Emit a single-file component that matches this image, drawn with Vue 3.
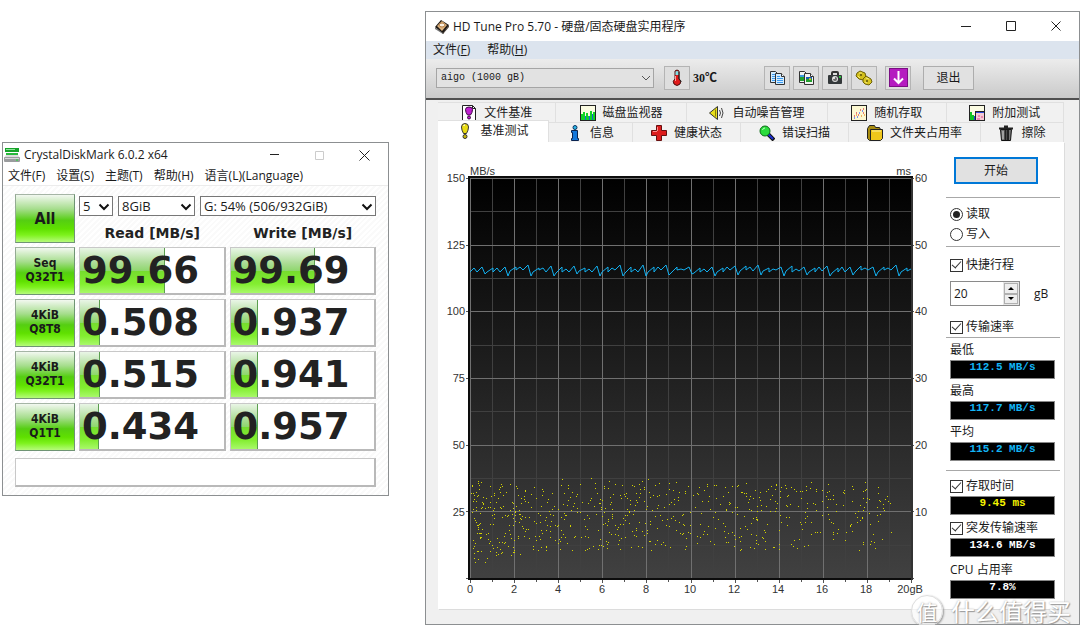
<script setup>
import { ref } from 'vue'

const runs = ref('5')
const size = ref('8GiB')
const drive = ref('G: 54% (506/932GiB)')
const disk = ref('aigo (1000 gB)')
const mode = ref('read')
const shortStroke = ref(true)
const transfer = ref(true)
const access = ref(true)
const burst = ref(true)
const stroke = ref('20')

const cdmMenu = ['文件(F)', '设置(S)', '主题(T)', '帮助(H)', '语言(L)(Language)']
const tests = [
  { a: 'Seq', b: 'Q32T1', read: '99.66', rp: 59, write: '99.69', wp: 59 },
  { a: '4KiB', b: 'Q8T8', read: '0.508', rp: 14, write: '0.937', wp: 19 },
  { a: '4KiB', b: 'Q32T1', read: '0.515', rp: 14, write: '0.941', wp: 19 },
  { a: '4KiB', b: 'Q1T1', read: '0.434', rp: 13, write: '0.957', wp: 19 }
]

const tabsTop = [
  { icon: 'filebench', text: '文件基准', w: 118 },
  { icon: 'monitor', text: '磁盘监视器', w: 130 },
  { icon: 'sound', text: '自动噪音管理', w: 141 },
  { icon: 'random', text: '随机存取', w: 118 },
  { icon: 'extra', text: '附加测试', w: 117 }
]
const tabsBottom = [
  { icon: 'bench', text: '基准测试', w: 111, active: true },
  { icon: 'info', text: '信息', w: 84 },
  { icon: 'health', text: '健康状态', w: 108 },
  { icon: 'scan', text: '错误扫描', w: 108 },
  { icon: 'folder', text: '文件夹占用率', w: 132 },
  { icon: 'erase', text: '擦除', w: 83 }
]

const speeds = [
  { label: '最低', value: '112.5 MB/s' },
  { label: '最高', value: '117.7 MB/s' },
  { label: '平均', value: '115.2 MB/s' }
]

const x0 = 470
const x1 = 911
const y0 = 178
const y1 = 578
const cols = Array.from({ length: 21 }, (_, i) => ({ x: Math.round(x0 + (i * (x1 - x0)) / 20), major: i % 2 === 0, n: i }))
const rows = Array.from({ length: 13 }, (_, i) => ({ y: Math.round(y0 + (i * (y1 - y0)) / 12), major: i % 2 === 0, n: i }))

let seed = 77123
const rand = () => {
  seed = (seed * 48271) % 2147483647
  return seed / 2147483647
}
const dots = Array.from({ length: 700 }, () => {
  const t = Math.pow(rand(), 1.45)
  const low = t < 0.04 ? 564 : t < 0.12 ? 557 : 551
  const edge = 480 + rand() * 5 - (rand() > 0.93 ? 6 : 0)
  return { x: Math.round(x0 + rand() * 5 + t * 417), y: Math.round(edge + (low - edge) * rand()) }
})

const wave = (() => {
  const steps = [[0, 1], [4, -2], [3, 1], [5, -4], [3, 5], [2, 2], [6, -3]]
  const pts = []
  let x = x0
  for (let i = 0; x < x1; i++) {
    const [dx, dy] = steps[i % steps.length]
    x = Math.min(x1, x + dx)
    pts.push(`${x},${270 + dy + Math.round(rand() * 3 - 1.5)}`)
  }
  return pts.join(' ')
})()
</script>

<template>
  <main class="desktop">
    <section class="win cdm">
      <header class="title">
        <svg class="app-icon" viewBox="0 0 16 16" width="16" height="16">
          <path d="M1 1h14v4H1z" fill="#16a32a" />
          <path d="M2 2h9v1H2z" fill="#8fe79a" />
          <path d="M2 6h12v2H2z" fill="#27b83b" />
          <path d="M2 8h12l2 3H0z" fill="#dcdcdc" />
          <rect x="0" y="10" width="16" height="5" rx="1" fill="#9a9c9e" />
          <path d="M1 11h14v1H1z" fill="#d5d7d9" />
          <circle cx="13" cy="13" r="1" fill="#3fd04e" />
        </svg>
        <h1>CrystalDiskMark 6.0.2 x64</h1>
        <div class="controls">
          <button type="button" aria-label="Minimize"><svg viewBox="0 0 11 11" width="11" height="11"><path d="M1 4.500h9" stroke="#222" /></svg></button>
          <button type="button" aria-label="Maximize" disabled><svg viewBox="0 0 11 11" width="11" height="11"><path d="M1.500 1.500h8v8h-8z" fill="none" stroke="#ccc" /></svg></button>
          <button type="button" aria-label="Close"><svg viewBox="0 0 11 11" width="11" height="11"><path d="M.5.5l10 10M10.500.5l-10 10" stroke="#222" /></svg></button>
        </div>
      </header>
      <nav class="menu">
        <button v-for="m in cdmMenu" :key="m" type="button">{{ m }}</button>
      </nav>
      <div class="cdm-body">
        <div class="bench">
          <button type="button" class="green all">All</button>
          <div class="top">
            <div class="selects">
              <span class="sel runs">
                <select v-model="runs" aria-label="Test count"><option>5</option></select>
                <svg viewBox="0 0 12 8" width="12" height="8"><path d="M1.500 1.500L6 6l4.500-4.500" fill="none" stroke="#111" stroke-width="2" /></svg>
              </span>
              <span class="sel size">
                <select v-model="size" aria-label="Test size"><option>8GiB</option></select>
                <svg viewBox="0 0 12 8" width="12" height="8"><path d="M1.500 1.500L6 6l4.500-4.500" fill="none" stroke="#111" stroke-width="2" /></svg>
              </span>
              <span class="sel drive">
                <select v-model="drive" aria-label="Drive"><option>G: 54% (506/932GiB)</option></select>
                <svg viewBox="0 0 12 8" width="12" height="8"><path d="M1.500 1.500L6 6l4.500-4.500" fill="none" stroke="#111" stroke-width="2" /></svg>
              </span>
            </div>
            <div class="heads"><span>Read [MB/s]</span><span>Write [MB/s]</span></div>
          </div>
          <template v-for="t in tests" :key="t.a + t.b">
            <button type="button" class="green"><span>{{ t.a }}</span><span>{{ t.b }}</span></button>
            <div class="cell"><i class="bar" :style="{ width: t.rp + '%' }"></i><b>{{ t.read }}</b></div>
            <div class="cell"><i class="bar" :style="{ width: t.wp + '%' }"></i><b>{{ t.write }}</b></div>
          </template>
        </div>
        <div class="comment"></div>
      </div>
    </section>

    <section class="win hdt">
      <header class="title">
        <svg class="app-icon" viewBox="0 0 16 16" width="16" height="16">
          <path d="M1 8l6-7 8 5-6 9z" fill="#1d1814" />
          <path d="M1 8l8 6v1L1 10z" fill="#777" />
          <path d="M3 7l5-5 5 4-5 6z" fill="#dfb582" />
          <ellipse cx="8" cy="6" rx="3" ry="2" fill="#f9efe0" stroke="#b27a3d" />
          <path d="M9 14l6-8v2l-6 7z" fill="#4b4038" />
        </svg>
        <h1>HD Tune Pro 5.70 - 硬盘/固态硬盘实用程序</h1>
        <div class="controls">
          <button type="button" aria-label="Minimize"><svg viewBox="0 0 11 11" width="11" height="11"><path d="M0 5.500h10" stroke="#222" /></svg></button>
          <button type="button" aria-label="Maximize"><svg viewBox="0 0 11 11" width="11" height="11"><path d="M.5.5h9v9h-9z" fill="none" stroke="#222" /></svg></button>
          <button type="button" aria-label="Close"><svg viewBox="0 0 11 11" width="11" height="11"><path d="M.5.5l9 9M9.500.5l-9 9" stroke="#222" /></svg></button>
        </div>
      </header>
      <nav class="menu">
        <button type="button">文件(<u>F</u>)</button>
        <button type="button">帮助(<u>H</u>)</button>
      </nav>
      <div class="toolbar">
        <span class="sel disk">
          <select v-model="disk" aria-label="Disk"><option>aigo (1000 gB)</option></select>
          <svg viewBox="0 0 10 6" width="10" height="6"><path d="M1 1l4 4 4-4" fill="none" stroke="#555" /></svg>
        </span>
        <button type="button" class="tool" aria-label="Temperature">
          <svg viewBox="0 0 16 18" width="16" height="18">
            <path d="M6 2q2-2 4 0v8q3 2 1 5-3 3-6 0-2-3 1-5z" fill="#e01a1a" stroke="#4a1010" />
            <path d="M6.500 2.500q1.500-1 3 0V6h-3z" fill="#7fdfe6" />
            <path d="M6.500 7v5" stroke="#ff9a9a" />
            <path d="M10 3v7q2 1 2 3" stroke="#222" fill="none" />
          </svg>
        </button>
        <output class="temp">30℃</output>
        <div class="tools">
          <button type="button" class="tool" aria-label="Copy text">
            <svg viewBox="0 0 18 18" width="18" height="18">
              <path d="M2.500 2.500h5l2 2v9h-7z" fill="#d4ecff" stroke="#333" />
              <path d="M4 5.500h4M4 7.500h4M4 9.500h4M4 11.500h4" stroke="#3c9bf0" />
              <path d="M7.500 4.500h6l3 3v8h-9z" fill="#d4ecff" stroke="#333" />
              <path d="M13.500 4.500v3h3" fill="#fff" stroke="#333" />
              <path d="M9 7.500h3M9 9.500h6M9 11.500h6M9 13.500h6" stroke="#3c9bf0" />
            </svg>
          </button>
          <button type="button" class="tool" aria-label="Copy image">
            <svg viewBox="0 0 18 18" width="18" height="18">
              <path d="M2.500 2.500h5l2 2v9h-7z" fill="#f2f2f2" stroke="#333" />
              <path d="M3 6h5v6H3z" fill="#22a02c" /><path d="M3 6h5v2H3z" fill="#3a9be0" />
              <path d="M7.500 4.500h6l3 3v8h-9z" fill="#f2f2f2" stroke="#333" />
              <path d="M13.500 4.500v3h3" fill="#fff" stroke="#333" />
              <path d="M9 8h6v5H9z" fill="#22a02c" /><path d="M9 8h6v2H9z" fill="#1a5bb0" /><circle cx="13" cy="10" r="1" fill="#f0d020" />
            </svg>
          </button>
          <button type="button" class="tool" aria-label="Screenshot">
            <svg viewBox="0 0 18 18" width="18" height="18">
              <path d="M6 6V4q0-1 1-1h4q1 0 1 1v2" fill="none" stroke="#333" stroke-width="2" />
              <rect x="2" y="6" width="14" height="9" rx="1" fill="#33383a" />
              <circle cx="9" cy="10" r="3" fill="#ddd" /><circle cx="9" cy="10" r="2" fill="#666" /><circle cx="8" cy="9" r="1" fill="#fff" />
              <path d="M13 7h2v2h-2z" fill="#2bc13b" />
            </svg>
          </button>
          <button type="button" class="tool" aria-label="Settings">
            <svg viewBox="0 0 18 18" width="18" height="18">
              <path d="M2 4l3-2 5 2 1 4-3 3-4-1-3-3z" fill="#d2bf1a" stroke="#6d6108" />
              <path d="M8 10l3-3 5 3 1 3-3 3-4-1-2-2z" fill="#d8c521" stroke="#6d6108" />
              <circle cx="6" cy="6" r="1" fill="#5d5206" /><circle cx="12" cy="12" r="1" fill="#5d5206" />
              <path d="M4 4h3M11 9l3 1M3 7l2 2M10 13l2 1" stroke="#f4e878" />
            </svg>
          </button>
        </div>
        <button type="button" class="tool save" aria-label="Save">
          <svg viewBox="0 0 19 19" width="19" height="19">
            <rect x=".5" y=".5" width="18" height="18" fill="#b51cc0" stroke="#7b0f84" />
            <path d="M9.500 3v12M5 10.500l4.500 4.500 4.500-4.500" fill="none" stroke="#fff" stroke-width="2" />
          </svg>
        </button>
        <button type="button" class="exit">退出</button>
      </div>
      <div class="hdt-body">
        <div v-for="(list, r) in [tabsTop, tabsBottom]" :key="r" class="tabs" role="tablist">
          <button v-for="t in list" :key="t.text" type="button" role="tab" :aria-selected="!!t.active" class="tab" :class="{ active: t.active }" :style="{ flexGrow: t.w }">
            <svg viewBox="0 0 16 16" width="16" height="16">
              <template v-if="t.icon === 'filebench'">
                <path d="M1.500.5h10l3 3v12h-13z" fill="#fff" stroke="#222" /><path d="M11.500.5v3h3" fill="none" stroke="#222" />
                <path d="M4.500 4.500q0-2.500 3.500-2.500t3.500 2.500q0 3-2 5.500h-3q-2-2.500-2-5.500z" fill="#c01fd0" stroke="#3d0644" /><circle cx="8" cy="12.500" r="1.500" fill="#c01fd0" stroke="#3d0644" />
              </template>
              <template v-else-if="t.icon === 'monitor'">
                <rect x=".5" y=".5" width="15" height="15" fill="#fbfbe2" stroke="#222" />
                <path d="M1 15V9h2V7h2v4h1V8h2v3h2V6h2v3h1V7h2v8z" fill="#11d425" /><path d="M5.500 15v-4M9.500 15v-4M12.500 15V9" stroke="#116bd0" />
              </template>
              <template v-else-if="t.icon === 'sound'">
                <path d="M.5 8L8.500 1.500v13z" fill="#e8df1c" stroke="#333" /><path d="M6.500 4.500v7" stroke="#8a8008" />
                <path d="M10.500 5q2 3 0 6M12.500 3q3 5 0 10" fill="none" stroke="#444" />
              </template>
              <template v-else-if="t.icon === 'random'">
                <rect x=".5" y=".5" width="15" height="15" fill="#fcf8d2" stroke="#222" />
                <path d="M3 11h1M5 8h1M7 10h1M9 5h1M12 4h1M12 8h1" stroke="#e87878" stroke-width="2" /><path d="M3 13h1M6 12h1M8 8h1M11 6h1" stroke="#7c92ed" stroke-width="2" /><path d="M5 10h1M10 11h1M13 10h1" stroke="#f0b060" stroke-width="2" />
              </template>
              <template v-else-if="t.icon === 'extra'">
                <rect x=".5" y=".5" width="15" height="15" fill="#fbfbe2" stroke="#222" /><path d="M1 15V7h2v3h2v5z" fill="#12c424" /><path d="M5 15v-4h2v4z" fill="#1a42e0" />
                <rect x="6.500" y="6.500" width="9" height="9" fill="#f5c9d6" stroke="#222" /><path d="M7 7h8v1H7z" fill="#2a49d8" /><path d="M9 11h2M12 12h2M8 14h3" stroke="#e0488a" />
              </template>
              <template v-else-if="t.icon === 'bench'">
                <path d="M4.500 4q0-3.500 3.500-3.500T11.500 4q0 3-2 6.500h-3Q4.500 7 4.500 4z" fill="#e9dc12" stroke="#333" /><path d="M6.500 3q0-1 1.500-1" stroke="#fff" fill="none" /><circle cx="8" cy="13.500" r="2" fill="#c8ba0c" stroke="#333" />
              </template>
              <template v-else-if="t.icon === 'info'">
                <circle cx="8" cy="2.500" r="2" fill="#28b6e8" stroke="#0b3360" /><path d="M4.500 5.500h6v8h1v2h-7v-2h1v-6h-1z" fill="#1478dc" stroke="#0b2450" />
              </template>
              <template v-else-if="t.icon === 'health'">
                <path d="M5.500.5h5v5h5v5h-5v5h-5v-5h-5v-5h5z" fill="#dd1c1c" stroke="#681010" /><path d="M6.500 6V2M2 6.500h4" stroke="#ff8b8b" />
              </template>
              <template v-else-if="t.icon === 'scan'">
                <path d="M9 9l6 6" stroke="#111" stroke-width="4" /><path d="M9 9l5 5" stroke="#1c2fd0" stroke-width="2" /><circle cx="6" cy="6" r="5" fill="#2bdc3d" stroke="#0d6b18" /><path d="M3.500 5Q4 3 6 3" fill="none" stroke="#c4ffca" />
              </template>
              <template v-else-if="t.icon === 'folder'">
                <path d="M.5 3.500l2-3h5l1 2h4l1 2v9l-2 2H2.500l-2-2z" fill="#a88c10" stroke="#222" /><path d="M3.500 4.500h12v9l-2 2h-10z" fill="#f0c61b" stroke="#222" /><path d="M5 6h9" stroke="#fdf0a0" />
              </template>
              <template v-else>
                <path d="M2.500 4.500h11l-1 11h-9z" fill="#777" stroke="#111" /><path d="M1 3.500h14M6 1.500h4" stroke="#222" stroke-width="2" /><path d="M7.500 5v10M10 5v10" stroke="#222" stroke-width="2" /><path d="M5 6v8" stroke="#ccc" />
              </template>
            </svg>
            <span>{{ t.text }}</span>
          </button>
        </div>
        <div class="panel">
          <svg class="chart" viewBox="438 142 502 460" role="img" aria-label="Transfer rate and access time">
            <defs>
              <linearGradient id="plot" x1="0" y1="0" x2="0" y2="1"><stop offset="0" stop-color="#000" /><stop offset="1" stop-color="#414141" /></linearGradient>
            </defs>
            <rect x="468" y="176" width="445" height="404" fill="url(#plot)" />
            <g shape-rendering="crispEdges">
              <path v-for="c in cols.filter(c => !c.major)" :key="'a' + c.n" :d="`M${c.x + 0.5} ${y0}V${y1}`" stroke="#404040" />
              <path v-for="r in rows.filter(r => !r.major)" :key="'b' + r.n" :d="`M${x0} ${r.y + 0.5}H${x1}`" stroke="#404040" />
              <path v-for="c in cols.filter(c => c.major)" :key="'c' + c.n" :d="`M${c.x + 0.5} ${y0}V${y1}`" stroke="#707070" />
              <path v-for="r in rows.filter(r => r.major)" :key="'d' + r.n" :d="`M${x0} ${r.y + 0.5}H${x1}`" stroke="#707070" />
              <path d="M468 177h445M469 176v404M468 579h445" fill="none" stroke="#0c0c0c" stroke-width="2" />
              <path d="M912 178v402" stroke="#333" stroke-width="2" />
              <path v-for="c in cols" :key="'e' + c.n" :d="`M${c.x + 0.5} 580v${c.major ? 3 : 2}`" stroke="#555" />
              <path v-for="r in rows.filter(r => r.major)" :key="'f' + r.n" :d="`M466 ${r.y + 0.5}h2M913 ${r.y + 0.5}h1`" stroke="#555" />
              <rect v-for="(d, i) in dots" :key="i" :x="d.x" :y="d.y" width="1" height="1" fill="#d4d400" />
            </g>
            <polyline :points="wave" fill="none" stroke="#12b0f0" />
            <g class="axis">
              <text v-for="n in 6" :key="n" x="465" :y="182 + (n - 1) * 67 - (n > 2 ? 1 : 0)" text-anchor="end">{{ 175 - n * 25 }}</text>
              <text v-for="n in 6" :key="n" x="915" :y="182 + (n - 1) * 67 - (n > 2 ? 1 : 0)">{{ 70 - n * 10 }}</text>
              <text v-for="n in 10" :key="n" :x="470 + (n - 1) * 44" y="593" text-anchor="middle">{{ (n - 1) * 2 }}</text>
              <text x="910" y="593" text-anchor="middle">20gB</text>
              <text x="470" y="175">MB/s</text>
              <text x="911" y="175" text-anchor="end">ms</text>
            </g>
          </svg>
          <aside class="side">
            <button type="button" class="start">开始</button>
            <hr>
            <div class="radios">
              <label class="opt"><input v-model="mode" type="radio" name="mode" value="read">读取</label>
              <label class="opt"><input v-model="mode" type="radio" name="mode" value="write">写入</label>
            </div>
            <hr>
            <label class="opt stroke"><input v-model="shortStroke" type="checkbox">快捷行程</label>
            <div class="spin">
              <span class="spinbox">
                <input v-model="stroke" type="text" aria-label="Short stroke size">
                <span class="arrows">
                  <button type="button" aria-label="Increase"><svg viewBox="0 0 6 3" width="6" height="3"><path d="M0 3l3-3 3 3z" /></svg></button>
                  <button type="button" aria-label="Decrease"><svg viewBox="0 0 6 3" width="6" height="3"><path d="M0 0l3 3 3-3z" /></svg></button>
                </span>
              </span>
              <span>gB</span>
            </div>
            <label class="opt"><input v-model="transfer" type="checkbox">传输速率</label>
            <hr>
            <div class="stats speeds">
              <div v-for="s in speeds" :key="s.label"><span class="opt">{{ s.label }}</span><output class="led">{{ s.value }}</output></div>
            </div>
            <hr>
            <div class="stats">
              <div><label class="opt"><input v-model="access" type="checkbox">存取时间</label><output class="led yellow">9.45 ms</output></div>
              <div><label class="opt"><input v-model="burst" type="checkbox">突发传输速率</label><output class="led white">134.6 MB/s</output></div>
              <div><span class="opt">CPU 占用率</span><output class="led white">7.8%</output></div>
            </div>
          </aside>
        </div>
      </div>
      <div class="mark"><span class="seal">值</span><span>什么值得买</span></div>
    </section>
  </main>
</template>

<style>
body { margin: 0; background: #fff; }
</style>

<style scoped>
* { box-sizing: border-box; }
.desktop {
  display: grid;
  grid-template-columns: minmax(0, 387fr) minmax(0, 655fr);
  column-gap: 36px;
  align-items: start;
  padding: 11px 0 0 2px;
  font: 12px/16px "Open Sans", "Noto Sans CJK SC", sans-serif;
  color: #1a1a1a;
}
button, select, input { font: inherit; color: inherit; margin: 0; border-radius: 0; }
button { padding: 0; border: 0; background: none; white-space: nowrap; }
svg { display: block; flex: none; }
.win { position: relative; border: 1px solid #8c8f91; background: #fff; }
.title { display: flex; align-items: center; }
h1 { flex: 1; margin: 0; font: inherit; white-space: nowrap; }
.controls { display: flex; gap: 34px; }
.menu { display: flex; align-items: center; }

.cdm { margin-top: 131px; }
.cdm .title { height: 24px; padding: 0 18px 0 1px; gap: 4px; }
.cdm .menu { height: 19px; padding: 0 5px; gap: 11px; border-bottom: 1px solid #ececec; }
.cdm-body { padding: 8px 12px; background: repeating-linear-gradient(135deg, #fff 0 2px, #fafafa 2px 4px); }
.bench { display: grid; grid-template-columns: 60px 1fr 1fr; grid-template-rows: 49px; grid-auto-rows: 48px; gap: 4px; }
.green {
  display: flex; flex-direction: column; align-items: center; justify-content: center;
  border: 1px solid #6f9474; border-top-color: #a5b5a5; border-left-color: #93aa93;
  background: linear-gradient(#f2f8f0, #a5dd8c 30%, #55ce12 54%, #5fe000 72%, #7df21c 85%, #b5fb7a);
  font: bold 12px/14px "DejaVu Sans Condensed", "DejaVu Sans", sans-serif;
}
.green span:first-child { margin-top: -2px; }
.all { font-size: 16px; }
.top { grid-column: 2 / 4; display: flex; flex-direction: column; padding-top: 2px; }
.selects { display: flex; gap: 5px; }
.sel { position: relative; display: block; }
.sel select { display: block; width: 100%; height: 20px; padding: 0 3px; border: 1px solid #777; background: #fff; appearance: none; }
.sel svg { position: absolute; right: 3px; top: 7px; pointer-events: none; }
.runs { flex: 34 1 0; }
.size { flex: 77 1 0; }
.drive { flex: 176 1 0; }
.selects select { font-size: 13px; }
.heads { display: grid; grid-template-columns: 1fr 1fr; gap: 4px; padding-top: 7px; text-align: center; font: bold 14px/20px "DejaVu Sans", sans-serif; color: #222; }
.cell { position: relative; display: flex; align-items: center; border: 1px solid #c8c8c8; border-right: 2px solid #b9b9b9; border-bottom: 2px solid #b9b9b9; background: #fff; padding-left: 2px; }
.bar { position: absolute; left: 0; top: 0; bottom: 0; border-right: 1px solid #5a9e4e; background: linear-gradient(#e9f5e6, #a9dc92 35%, #8ed76c 51%, #76dd2e 52%, #83ee30 80%, #a8f96a); }
.cell b { position: relative; font: bold 37px/44px "DejaVu Sans", sans-serif; color: #222; }
.comment { height: 29px; margin-top: 7px; border: 1px solid #c8c8c8; border-right: 2px solid #b9b9b9; border-bottom: 2px solid #b9b9b9; background: #fff; }

.hdt { background: #f0f0f0; }
.hdt .title { height: 29px; padding: 0 17px 0 8px; gap: 3px; background: #fff; }
.hdt .menu { height: 18px; padding: 0 7px; gap: 17px; background: #dce4ee; }
.toolbar { display: flex; align-items: center; height: 41px; padding: 0 105px 2px 10px; background: linear-gradient(#ececec, #cacaca); border-bottom: 2px solid #505050; }
.disk { flex: 0 1 218px; }
.disk select { padding: 0 4px; border-color: #a5a5a5; background: #e2e2e2; font: 10px/18px "Liberation Mono", monospace; }
.tool { display: flex; align-items: center; justify-content: center; width: 26px; height: 24px; border: 1px solid #b4b4b4; background: #dedede; }
.disk + .tool { margin-left: 10px; }
.temp { margin-left: 3px; font: bold 12px/16px "Liberation Serif", "Noto Sans CJK SC", serif; }
.tools { display: flex; gap: 3px; margin-left: auto; }
.save { margin-left: 8px; }
.exit { width: 51px; height: 24px; margin-left: 12px; border: 1px solid #adadad; background: #e1e1e1; }
.hdt-body { padding: 2px 15px 15px 12px; }
.tabs { display: flex; }
.tab { display: flex; flex: 1 1 0; align-items: center; justify-content: center; gap: 7px; min-width: 0; height: 20px; border-right: 1px solid #e0e0e0; border-top: 1px solid #e0e0e0; background: #f1f1f1; }
.tab.active { z-index: 1; height: 22px; margin-top: -2px; background: #fff; padding-bottom: 1px; }
.panel { display: flex; align-items: flex-start; background: #fff; box-shadow: 1px 1px 0 #dcdcdc; padding-bottom: 7px; }
.chart { flex: 1 1 0; min-width: 0; height: auto; }
.axis { font: 11px "Liberation Sans", sans-serif; fill: #333; }
.side { display: flex; flex-direction: column; width: 114px; flex: none; margin: 0 4px 0 6px; padding-top: 15px; }
.start { align-self: center; width: 84px; height: 27px; margin-left: -14px; margin-bottom: 13px; border: 2px solid #0078d7; background: #e1e1e1; }
hr { width: 100%; height: 1px; margin: 0; border: 0; background: #a8a8a8; }
.radios { padding: 6px 0 2px; }
.opt { display: flex; align-items: center; gap: 3px; height: 20px; padding-left: 4px; white-space: nowrap; }
.opt input { display: grid; place-items: center; width: 13px; height: 13px; border: 1px solid #333; background: #fff; appearance: none; }
.opt input[type="radio"] { border-radius: 50%; }
.opt input[type="radio"]:checked::after { content: ""; width: 7px; height: 7px; border-radius: 50%; background: #222; }
.opt input[type="checkbox"]:checked::after { content: ""; width: 8px; height: 4px; margin-bottom: 3px; border: solid #333; border-width: 0 0 1px 1px; transform: rotate(-48deg); }
.stroke { margin-top: 8px; }
.spin { display: flex; align-items: center; gap: 14px; margin: 6px 0 11px 4px; }
.spinbox { display: flex; width: 70px; height: 25px; border: 1px solid #8a8a8a; background: #e6e6e6; }
.spinbox input { flex: 1; min-width: 0; padding: 0 3px; border: 0; background: #fff; }
.arrows { display: flex; flex-direction: column; width: 16px; padding: 1px; }
.arrows button { display: grid; flex: 1; place-items: center; border: 1px solid #b0b0b0; background: #eee; }
.stats { display: flex; flex-direction: column; gap: 3px; padding-top: 5px; }
.speeds { gap: 2px; padding: 2px 0 9px; }
.led { display: block; height: 19px; margin: 0 5px 0 4px; border: 1px solid #888; background: #000; color: #12b4f5; text-align: center; font: bold 11px/13px "Liberation Mono", monospace; }
.yellow { color: #f5f500; }
.white { color: #fff; }
.mark { position: absolute; right: 8px; bottom: -3px; display: flex; align-items: center; gap: 8px; color: #fff; font: 24px/28px "Noto Sans CJK SC", sans-serif; text-shadow: 1px 1px 1px #999, 0 0 2px #aaa; white-space: nowrap; }
.seal { display: grid; place-items: center; width: 32px; height: 32px; border: 1px solid #ddd; border-radius: 50%; box-shadow: 1px 1px 2px #999; background: #ffffffaa; font-size: 21px; line-height: 24px; }
</style>
